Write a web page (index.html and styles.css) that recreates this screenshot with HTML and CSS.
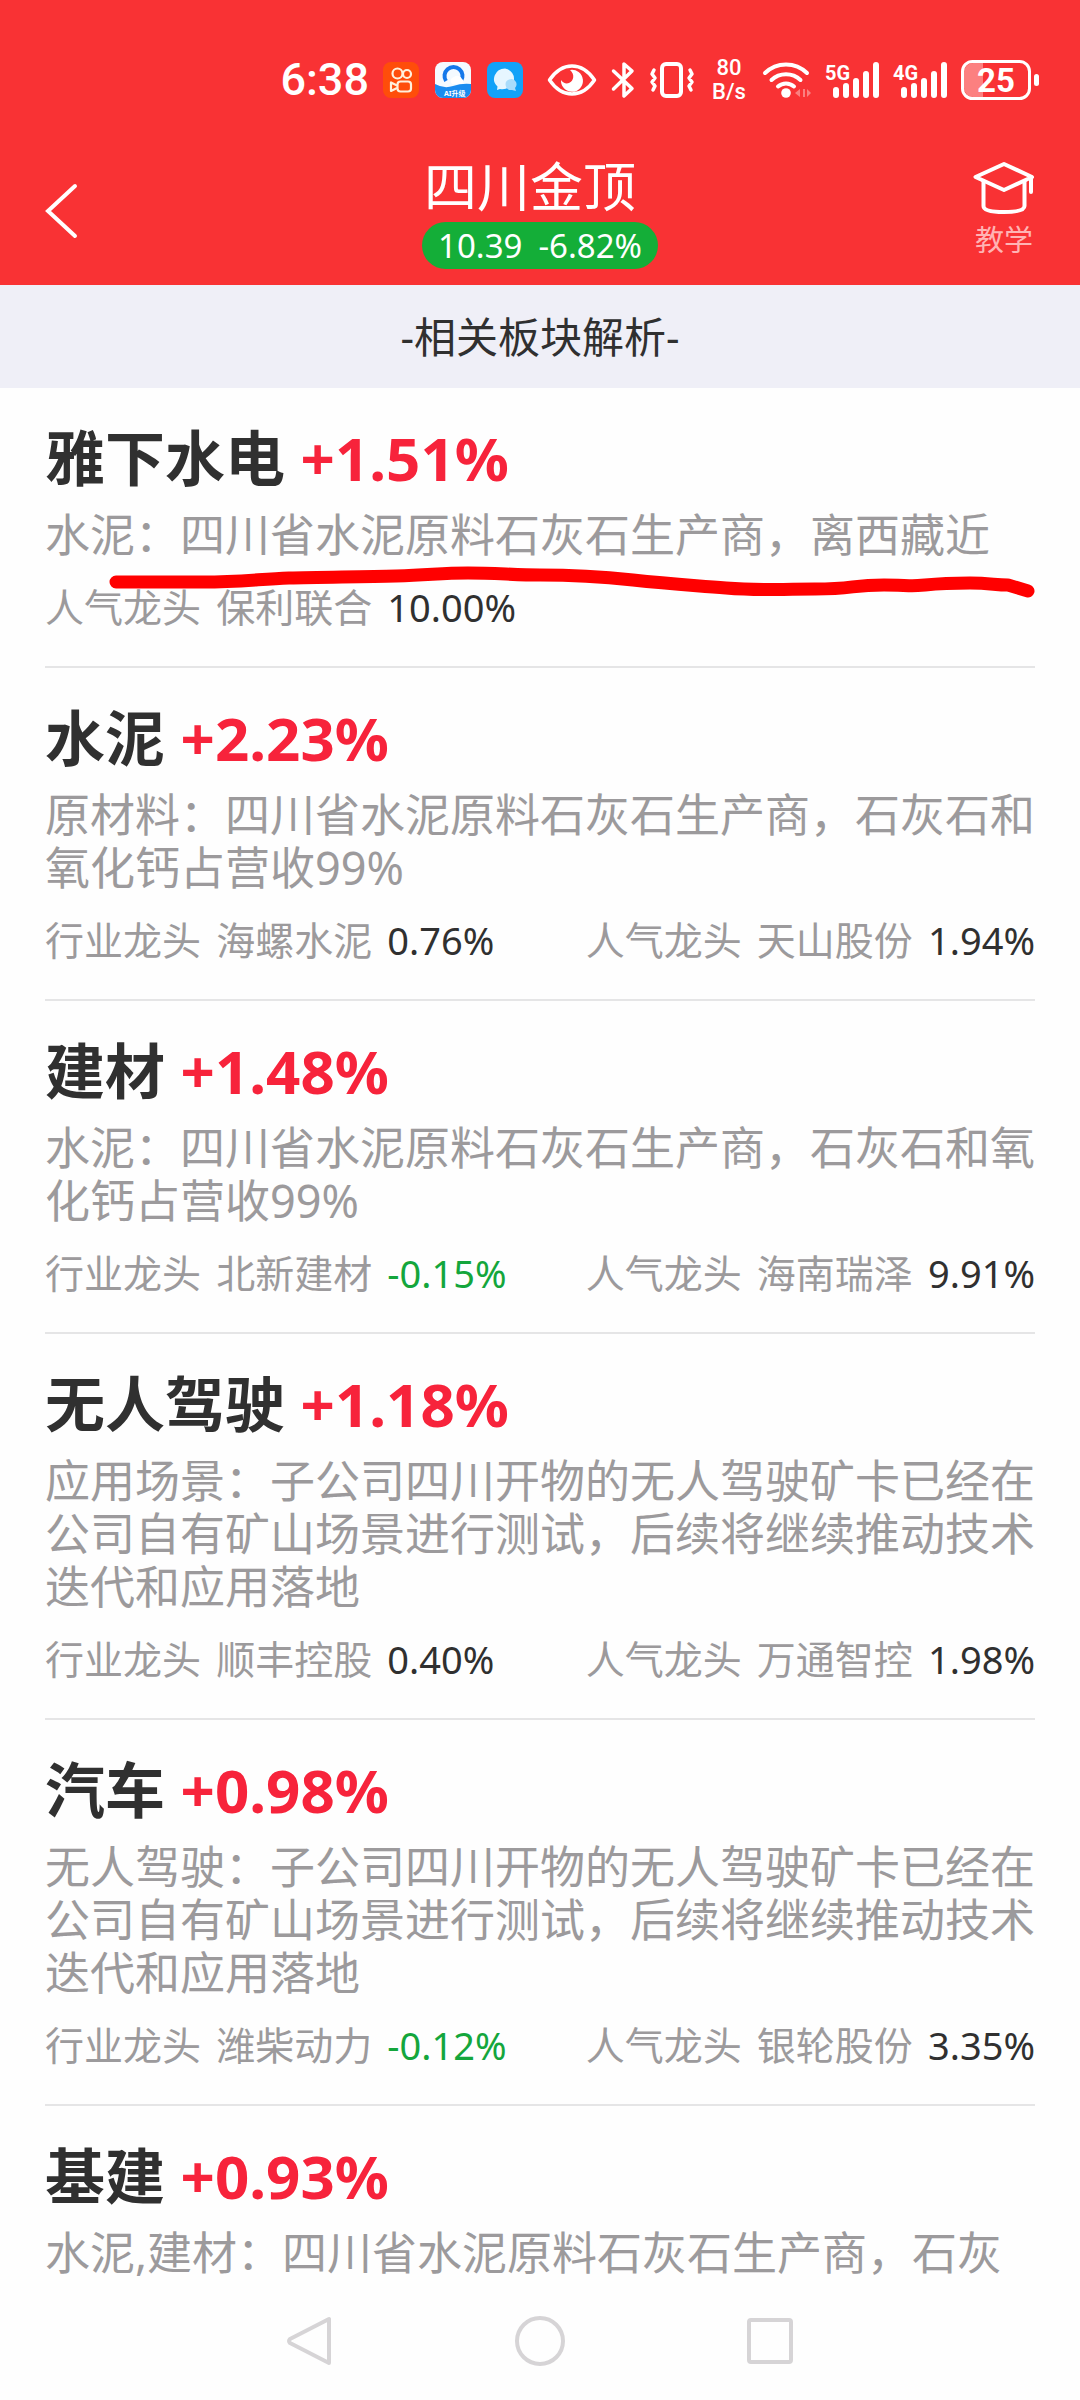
FILE: index.html
```html
<!DOCTYPE html>
<html lang="zh-CN">
<head>
    <meta charset="UTF-8">
    <meta name="viewport" content="width=device-width, initial-scale=1.0">
    <title>四川金顶 - 相关板块解析</title>
    <link rel="stylesheet" href="styles.css">
</head>
<body>
    <header class="header">
        <div class="status-bar">
            <span class="time">6:38</span>
            <div class="apps">
                <svg width="36" height="36" viewBox="0 0 36 36">
                    <rect width="36" height="36" rx="8" fill="#ff4d0a"/>
                    <g fill="none" stroke="#fff0dc" stroke-width="2.2" stroke-linejoin="round">
                        <circle cx="14.5" cy="11.5" r="5"/>
                        <circle cx="24" cy="12" r="4"/>
                        <rect x="14.5" y="19.5" width="13.5" height="10" rx="3"/>
                        <path d="M14 23.5 8 20.5v8.500l6-3"/>
                    </g>
                </svg>
                <svg width="36" height="36" viewBox="0 0 36 36">
                    <rect width="36" height="36" rx="8" fill="#f4faff"/>
                    <path d="M0 22q9 5 18 2t18-2v6a8 8 0 0 1-8 8H8a8 8 0 0 1-8-8z" fill="#1a8cf0"/>
                    <path d="M11 19a9 9 0 1 1 15 0" fill="none" stroke="#1478ea" stroke-width="4"/>
                    <path d="M17 22a4 4 0 0 1 2-7 5 5 0 0 1 8 2 3 3 0 0 1 0 5z" fill="#fff"/>
                    <text class="app-text" x="9" y="34">AI升级</text>
                </svg>
                <svg width="36" height="36" viewBox="0 0 36 36">
                    <rect width="36" height="36" rx="8" fill="#12a2f8"/>
                    <path d="M18 6.500a11.500 10.500 0 1 1-5 20.500l-3 1 .5-3.500A11.500 10.500 0 0 1 18 6.500z" fill="#e6f6ff"/>
                    <path d="M29 20a5.500 5.500 0 0 1-1 6l1 3-4-1a5.500 5.500 0 1 1 4-8z" fill="#a9dcfb"/>
                </svg>
            </div>
            <svg width="50" height="36" viewBox="0 0 50 36">
                <path d="M2.500 18Q12 4 25 4t22.500 14Q38 32 25 32T2.500 18z" fill="none" stroke="#fff" stroke-width="3.500" stroke-linejoin="round"/>
                <path d="M23 8c5 4 4 11-1 13-3 1-6 0-8-3A11 11 0 1 0 23 8z" fill="#fff"/>
            </svg>
            <svg width="24" height="36" viewBox="0 0 24 36">
                <path d="M2.500 9 21 26.500 13 34V21M2.500 27 21 9 13 2v13" fill="none" stroke="#fff" stroke-width="3.500" stroke-linecap="round" stroke-linejoin="round"/>
            </svg>
            <svg width="46" height="36" viewBox="0 0 46 36">
                <g fill="none" stroke="#fff" stroke-linecap="round" stroke-linejoin="round">
                    <rect x="13" y="2" width="19" height="32" rx="4" stroke-width="4"/>
                    <path d="m5 8-2 4 3 4-3 4 3 4-2 4m37-20 2 4-3 4 3 4-3 4 2 4" stroke-width="3.500"/>
                </g>
            </svg>
            <span class="speed">80<br>B/s</span>
            <svg width="48" height="36" viewBox="0 0 48 36">
                <g fill="none" stroke="#fff" stroke-width="4" stroke-linecap="round">
                    <path d="M2 11a30 30 0 0 1 42 0"/>
                    <path d="M8.500 18a21 21 0 0 1 29 0"/>
                    <path d="M15 24.500a12 12 0 0 1 16 0"/>
                </g>
                <circle cx="23" cy="31" r="4.800" fill="#fff"/>
                <path d="m37 27v8l-5-4zm3 0v8h2v-8zm4 0 4 4-4 4z" fill="#fa8080"/>
            </svg>
            <svg class="signal" width="54" height="36" viewBox="0 0 54 36">
                <text x="0" y="18">5G</text>
                <path d="M11 28v5M21 24v9M31 19v14M41 12v21M51 3v30"/>
            </svg>
            <svg class="signal" width="54" height="36" viewBox="0 0 54 36">
                <text x="0" y="18">4G</text>
                <path d="M11 28v5M21 24v9M31 19v14M41 12v21M51 3v30"/>
            </svg>
            <svg width="78" height="40" viewBox="0 0 78 40">
                <path d="M12 3h10v34H12a9 9 0 0 1-9-9V12a9 9 0 0 1 9-9z" fill="#fc8080"/>
                <rect x="1.500" y="1.500" width="67" height="37" rx="10" fill="none" stroke="#fff" stroke-width="3"/>
                <rect x="73" y="14" width="5" height="12" rx="2.500" fill="#fff"/>
                <text class="battery-text" x="35" y="32">25</text>
            </svg>
        </div>

        <div class="nav-bar">
            <button class="back" type="button" aria-label="返回">
                <svg width="32" height="54" viewBox="0 0 32 54">
                    <path d="M30 2 3 27l27 25" fill="none" stroke="#fff" stroke-width="4" stroke-linecap="round"/>
                </svg>
            </button>
            <div class="stock">
                <h1>四川金顶</h1>
                <div class="quote"><span>10.39</span><span>-6.82%</span></div>
            </div>
            <a class="teach" href="#">
                <svg width="62" height="52" viewBox="0 0 62 52">
                    <g fill="none" stroke="#fff" stroke-width="4" stroke-linejoin="round" stroke-linecap="round">
                        <path d="M31 2 2.500 15 31 28l28-13z"/>
                        <path d="M10.500 19v25q0 6 20.500 6t20.500-6V19M58 16v14"/>
                    </g>
                </svg>
                <span>教学</span>
            </a>
        </div>
    </header>

    <h2 class="notice">-相关板块解析-</h2>

    <main class="list">
        <section class="item">
            <h3>雅下水电 <span class="up">+1.51%</span></h3>
            <p class="desc">水泥：四川省水泥原料石灰石生产商，离西藏近</p>
            <div class="leaders">
                <div>人气龙头 <span>保利联合</span> <b>10.00%</b></div>
            </div>
            <!-- 手绘下划线 -->
            <svg class="mark" viewBox="0 0 1080 32">
                <path d="M116 15H203C240 15 260 12 289 11S360 10 396 9 440 6 468 6 515 8 540 8 595 9 633 13 690 18 726 21 775 22 815 22 850 18 884 18 905 20 925 18 950 16 970 16 995 18 1008 18L1028 24"/>
            </svg>
        </section>

        <section class="item">
            <h3>水泥 <span class="up">+2.23%</span></h3>
            <p class="desc">原材料：四川省水泥原料石灰石生产商，石灰石和氧化钙占营收99%</p>
            <div class="leaders">
                <div>行业龙头 <span>海螺水泥</span> <b>0.76%</b></div>
                <div>人气龙头 <span>天山股份</span> <b>1.94%</b></div>
            </div>
        </section>

        <section class="item">
            <h3>建材 <span class="up">+1.48%</span></h3>
            <p class="desc">水泥：四川省水泥原料石灰石生产商，石灰石和氧化钙占营收99%</p>
            <div class="leaders">
                <div>行业龙头 <span>北新建材</span> <b class="down">-0.15%</b></div>
                <div>人气龙头 <span>海南瑞泽</span> <b>9.91%</b></div>
            </div>
        </section>

        <section class="item">
            <h3>无人驾驶 <span class="up">+1.18%</span></h3>
            <p class="desc">应用场景：子公司四川开物的无人驾驶矿卡已经在公司自有矿山场景进行测试，后续将继续推动技术迭代和应用落地</p>
            <div class="leaders">
                <div>行业龙头 <span>顺丰控股</span> <b>0.40%</b></div>
                <div>人气龙头 <span>万通智控</span> <b>1.98%</b></div>
            </div>
        </section>

        <section class="item">
            <h3>汽车 <span class="up">+0.98%</span></h3>
            <p class="desc">无人驾驶：子公司四川开物的无人驾驶矿卡已经在公司自有矿山场景进行测试，后续将继续推动技术迭代和应用落地</p>
            <div class="leaders">
                <div>行业龙头 <span>潍柴动力</span> <b class="down">-0.12%</b></div>
                <div>人气龙头 <span>银轮股份</span> <b>3.35%</b></div>
            </div>
        </section>

        <section class="item">
            <h3>基建 <span class="up">+0.93%</span></h3>
            <p class="desc">水泥,建材：四川省水泥原料石灰石生产商，石灰</p>
        </section>
    </main>

    <nav class="system-nav">
        <button type="button" aria-label="后退">
            <svg width="50" height="50" viewBox="0 0 50 50"><path d="M44 3v44L5 27q-2-2 0-4z"/></svg>
        </button>
        <button type="button" aria-label="主页">
            <svg width="50" height="50" viewBox="0 0 50 50"><circle cx="25" cy="25" r="23"/></svg>
        </button>
        <button type="button" aria-label="最近任务">
            <svg width="50" height="50" viewBox="0 0 50 50"><rect x="4" y="4" width="42" height="42" rx="2"/></svg>
        </button>
    </nav>
</body>
</html>
```
FILE: styles.css
```css
* {
    margin: 0;
    padding: 0;
    box-sizing: border-box;
}

body {
    font-family: 'Noto Sans', 'Noto Sans CJK SC', sans-serif;
    background: #fefefe;
    color: #303030;
    height: 100vh;
    display: flex;
    flex-direction: column;
    overflow: hidden;
}

button {
    background: none;
    border: none;
}

svg {
    display: block;
    flex-shrink: 0;
    overflow: visible;
}

/* 顶部 */
.header {
    background: #f93234;
    color: #fff;
    padding: 56px 45px 16px;
}

.status-bar {
    display: flex;
    justify-content: flex-end;
    align-items: center;
    gap: 14px;
    height: 48px;
    margin-right: -4px;
}

.time {
    font-size: 45px;
    font-weight: 500;
    line-height: 48px;
    font-family: Roboto, sans-serif;
}

.apps {
    display: flex;
    gap: 16px;
    margin-right: 10px;
}

.app-text {
    font-size: 7px;
    font-weight: 700;
    fill: #fff;
}

.speed {
    width: 40px;
    font-family: Roboto, sans-serif;
    font-size: 22px;
    font-weight: 500;
    line-height: 24px;
    text-align: center;
}

.signal path {
    fill: none;
    stroke: #fff;
    stroke-width: 6px;
    stroke-linecap: round;
}

.signal text {
    fill: #fff;
    font-family: Roboto, sans-serif;
    font-size: 20px;
    font-weight: 700;
}

.battery-text {
    fill: #fff;
    font-family: Roboto, sans-serif;
    font-size: 33px;
    font-weight: 700;
    text-anchor: middle;
}

.nav-bar {
    display: grid;
    grid-template-columns: 1fr auto 1fr;
    align-items: center;
    margin-top: 48px;
}

.back {
    justify-self: start;
}

.stock {
    display: flex;
    flex-direction: column;
    align-items: center;
}

.stock h1 {
    padding-right: 20px;
    font-size: 53px;
    font-weight: 400;
    line-height: 70px;
}

.quote {
    display: flex;
    gap: 16px;
    padding: 0 16px;
    border-radius: 24px;
    background: #14ae38;
    font-size: 33px;
    line-height: 47px;
}

.teach {
    justify-self: end;
    display: flex;
    flex-direction: column;
    align-items: center;
    gap: 6px;
    color: #ffb4b4;
    font-size: 29px;
    line-height: 40px;
    text-decoration: none;
}

.notice {
    background: #efeff7;
    font-size: 42px;
    font-weight: 400;
    line-height: 103px;
    text-align: center;
}

/* 板块列表 */
.list {
    flex: 1;
    min-height: 0;
    overflow: hidden;
    padding: 0 45px;
}

.item {
    position: relative;
    padding: 34px 0 33px;
    border-bottom: 2px solid #e5e5e6;
}

.item:last-child {
    border-bottom: none;
}

.item h3 {
    font-size: 60px;
    font-weight: 700;
    line-height: 72px;
}

.up {
    color: #f7233b;
}

.desc {
    margin-top: 14px;
    color: #9c9a9c;
    font-size: 45px;
    line-height: 53px;
}

.leaders {
    display: flex;
    justify-content: space-between;
    margin-top: 20px;
    color: #9c9a9c;
    font-size: 39px;
    line-height: 52px;
}

.leaders span {
    margin: 0 5px;
}

.leaders b {
    color: #303030;
    font-size: 38px;
    font-weight: 400;
}

.leaders .down {
    color: #14a63c;
}

.mark {
    position: absolute;
    top: 179px;
    left: -45px;
    width: calc(100% + 90px);
}

.mark path {
    fill: none;
    stroke: #ff0000;
    stroke-width: 13px;
    stroke-linecap: round;
    stroke-linejoin: round;
}

/* 底部系统导航 */
.system-nav {
    display: flex;
    justify-content: center;
    height: 118px;
}

.system-nav button {
    width: 230px;
    display: flex;
    justify-content: center;
    align-items: center;
}

.system-nav svg {
    fill: none;
    stroke: #d6d4d6;
    stroke-width: 4px;
    stroke-linejoin: round;
}
```
